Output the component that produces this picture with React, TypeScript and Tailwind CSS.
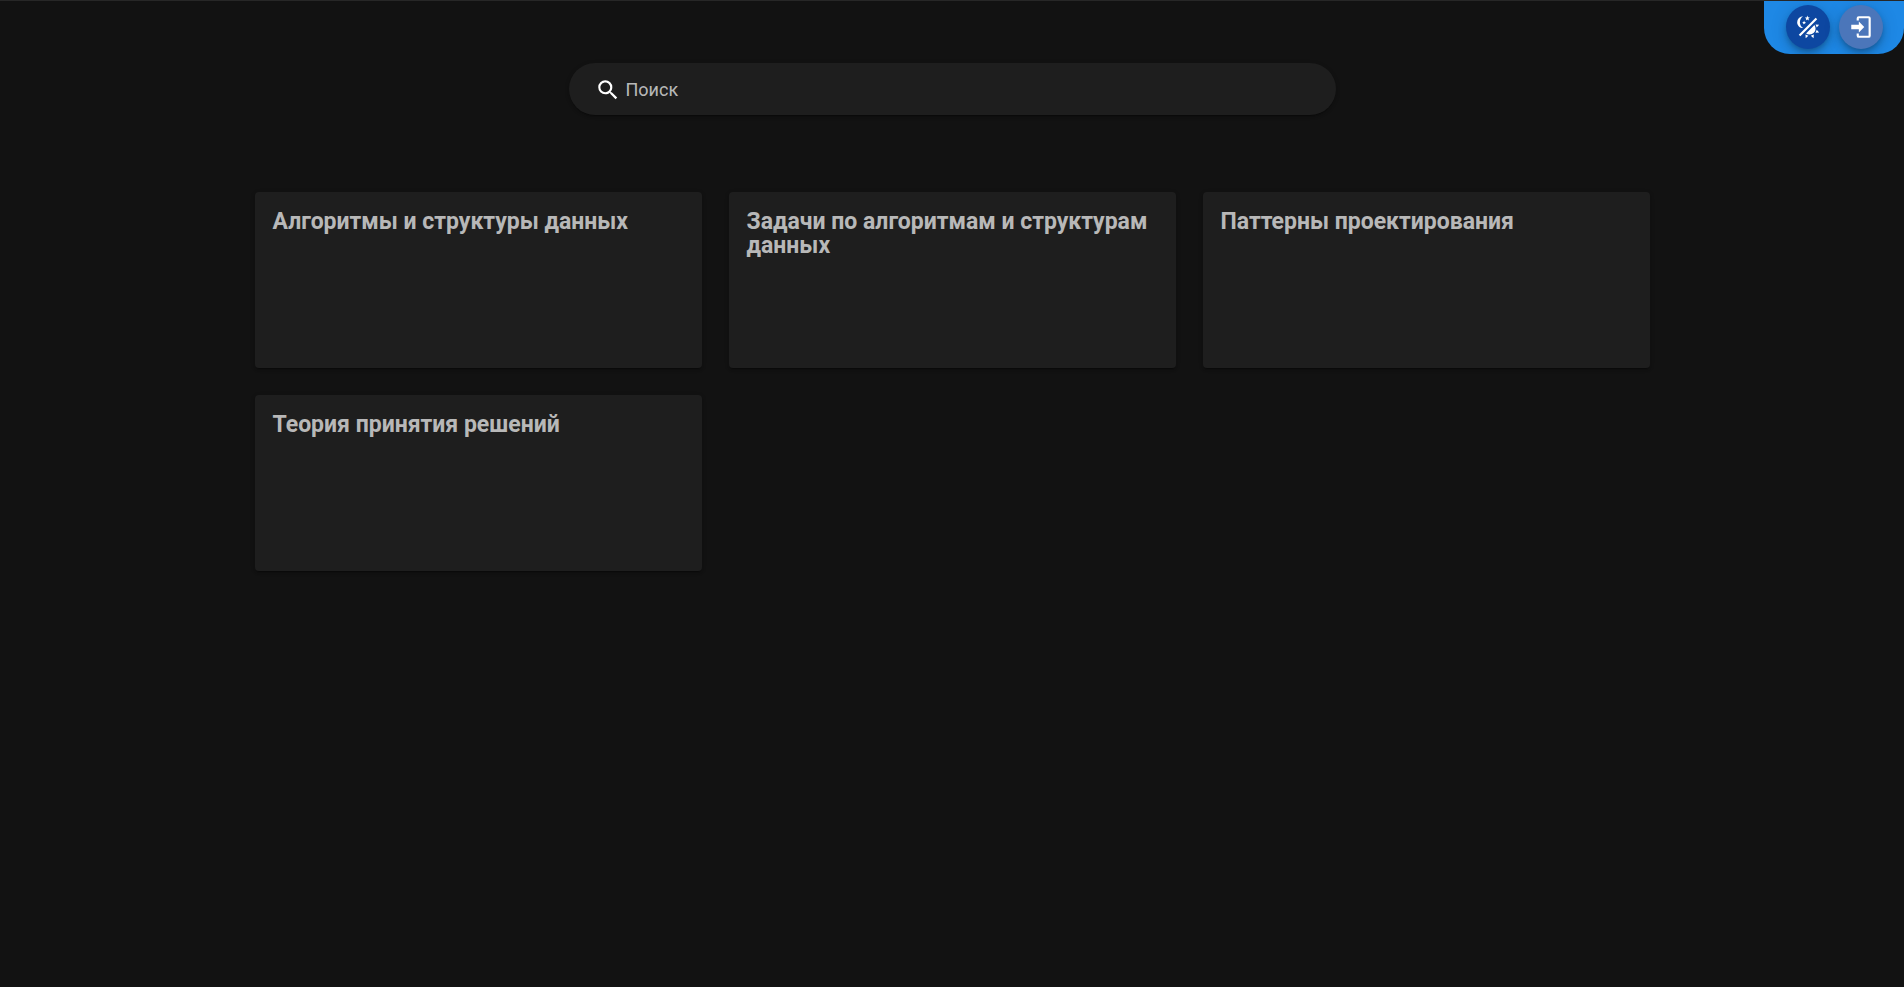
const topics = [
  "Алгоритмы и структуры данных",
  "Задачи по алгоритмам и структурам данных",
  "Паттерны проектирования",
  "Теория принятия решений",
];

const THEME =
  "M7.5,2C5.71,3.15 4.5,5.18 4.5,7.5C4.5,9.82 5.71,11.85 7.53,13C4.46,13 2,10.54 2,7.5A5.5,5.5 0 0,1 7.5,2M19.07,3.5L20.5,4.93L4.93,20.5L3.5,19.07L19.07,3.5M12.89,5.93L11.41,5L9.97,6L10.39,4.3L9,3.24L10.75,3.12L11.33,1.47L12,3.1L13.73,3.13L12.38,4.26L12.89,5.93M9.59,9.54L8.43,8.81L7.31,9.59L7.65,8.27L6.56,7.44L7.92,7.35L8.37,6.06L8.88,7.33L10.24,7.36L9.19,8.23L9.59,9.54M19,13.5A5.5,5.5 0 0,1 13.5,19C12.28,19 11.15,18.6 10.24,17.93L17.93,10.24C18.6,11.15 19,12.28 19,13.5M14.6,20.08L17.37,18.93L17.13,22.28L14.6,20.08M18.93,17.38L20.08,14.61L22.28,17.15L18.93,17.38M20.08,12.42L18.94,9.64L22.28,9.88L20.08,12.42M9.63,18.93L12.4,20.08L9.87,22.27L9.63,18.93Z";
const LOGIN =
  "M10,17V14H3V10H10V7L15,12L10,17M10,2H19A2,2 0 0,1 21,4V20A2,2 0 0,1 19,22H10A2,2 0 0,1 8,20V18H10V20H19V4H10V6H8V4A2,2 0 0,1 10,2Z";
const SEARCH =
  "M9.5,3A6.5,6.5 0 0,1 16,9.5C16,11.11 15.41,12.59 14.44,13.73L14.71,14H15.5L20.5,19L19,20.5L14,15.5V14.71L13.73,14.44C12.59,15.41 11.11,16 9.5,16A6.5,6.5 0 0,1 3,9.5A6.5,6.5 0 0,1 9.5,3M9.5,5C7,5 5,7 5,9.5C5,12 7,14 9.5,14C12,14 14,12 14,9.5C14,7 12,5 9.5,5Z";

function Icon({ path }: { path: string }) {
  return (
    <svg viewBox="0 0 24 24" className="size-[26px] shrink-0 fill-white" aria-hidden="true">
      <path d={path} />
    </svg>
  );
}

const round =
  "flex size-11 cursor-pointer items-center justify-center rounded-full shadow-[0_3px_5px_-1px_rgba(0,0,0,0.2),0_6px_10px_rgba(0,0,0,0.14),0_1px_18px_rgba(0,0,0,0.12)]";
const raised =
  "shadow-[0_3px_1px_-2px_rgba(0,0,0,0.2),0_2px_2px_rgba(0,0,0,0.14),0_1px_5px_rgba(0,0,0,0.12)]";

export default function App() {
  return (
    <div className="relative min-h-screen border-t border-[#272727] bg-[#121212] font-[Roboto,sans-serif]">
      <div className="absolute top-0 right-0 flex gap-[9px] overflow-hidden rounded-b-[26px] bg-[#1e88e5] pt-1 pr-[21px] pb-[5px] pl-[22px]">
        <button type="button" aria-label="Сменить тему" className={`${round} bg-[#0d47a1]`}>
          <Icon path={THEME} />
        </button>
        <button type="button" aria-label="Войти" className={`${round} bg-[#4b76ba]`}>
          <Icon path={LOGIN} />
        </button>
      </div>

      <main className="mx-auto flex max-w-[1395px] flex-col pt-[62px]">
        <label
          className={`mx-auto flex h-13 w-full max-w-[767px] items-center gap-[5px] rounded-full bg-[#1e1e1e] px-[26px] pt-0.5 ${raised}`}
        >
          <Icon path={SEARCH} />
          <input
            type="text"
            aria-label="Поиск"
            placeholder="Поиск"
            className="min-w-0 flex-1 bg-transparent text-[18px] leading-6 text-white outline-none placeholder:text-white/70"
          />
        </label>

        <section className="mt-[77px] grid grid-cols-1 gap-[27px] md:grid-cols-3">
          {topics.map((topic) => (
            <a
              key={topic}
              href="#"
              className={`min-h-44 rounded bg-[#1e1e1e] p-[18px] ${raised}`}
            >
              <h2 className="text-[23px] leading-6 font-bold text-white/70">{topic}</h2>
            </a>
          ))}
        </section>
      </main>
    </div>
  );
}
